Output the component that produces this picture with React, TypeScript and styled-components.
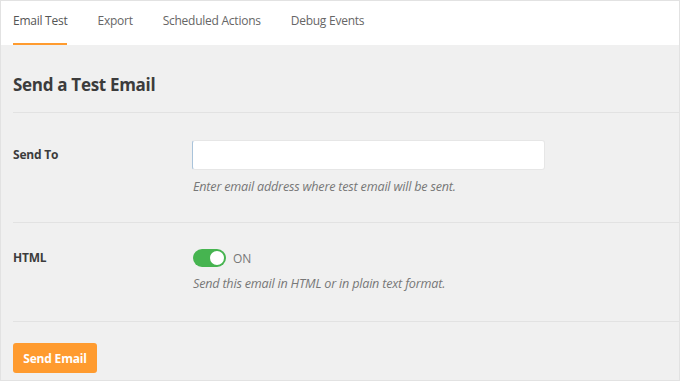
import React from 'react'
import styled, {createGlobalStyle} from 'styled-components'

const GlobalStyle = createGlobalStyle`
	html, body {
		margin: 0;
		padding: 0;
		background: #fff;
	}
	body {
		font-family: "Open Sans", "Noto Sans", sans-serif;
	}
	* {
		box-sizing: border-box;
	}
`

const Page = styled.div`
	width: 680px;
	height: 381px;
	border: 1px solid #e2e2e2;
	background-color: #f0f0f0;
	display: flex;
	flex-direction: column;
	overflow: hidden;
`

const TabBar = styled.nav`
	display: flex;
	gap: 30px;
	height: 44px;
	padding: 0 12px;
	background-color: #fff;
`

type TabProps = {
	active?: boolean
}

const Tab = styled.a<TabProps>`
	display: flex;
	align-items: center;
	height: 100%;
	font-size: 12px;
	color: ${props => props.active ? '#555' : '#666'};
	text-decoration: none;
	cursor: pointer;
	letter-spacing: -0.25px;
	border-bottom: 2px solid ${props => props.active ? '#ff9b2f' : 'transparent'};
	padding-bottom: 3px;
`

const Content = styled.section`
	flex: 1;
	padding-left: 12px;
`

const Heading = styled.h2`
	margin: 0;
	height: 68px;
	display: flex;
	align-items: center;
	padding-top: 11px;
	font-size: 17px;
	font-weight: 700;
	color: #3c3c3c;
	letter-spacing: -0.3px;
	border-bottom: 1px solid #e2e2e2;
`

type RowProps = {
	height: number
	top: number
}

const Row = styled.div<RowProps>`
	display: grid;
	grid-template-columns: 179px 1fr;
	height: ${props => props.height}px;
	padding-top: ${props => props.top}px;
	border-bottom: 1px solid #e2e2e2;
`

const Label = styled.label`
	font-size: 12px;
	font-weight: 700;
	color: #3c3c3c;
	line-height: 30px;
	letter-spacing: -0.2px;
`

const Field = styled.div`
	display: flex;
	flex-direction: column;
`

const TextInput = styled.input`
	width: 353px;
	height: 30px;
	border: 1px solid #e6e6e6;
	border-left: 1px solid #a9c3da;
	border-radius: 3px;
	background: #fff;
	outline: none;
	font: inherit;
`

const Help = styled.p`
	margin: 8px 0 0 1px;
	font-size: 12.6px;
	font-style: italic;
	color: #777;
	letter-spacing: -0.2px;
`

const SwitchWrap = styled.div`
	display: flex;
	align-items: center;
	gap: 7px;
	height: 30px;
	margin-left: 1px;
`

const Track = styled.span`
	position: relative;
	width: 33px;
	height: 18px;
	border-radius: 9px;
	background-color: #46b450;
`

const Knob = styled.span`
	position: absolute;
	top: 2px;
	right: 2px;
	width: 14px;
	height: 14px;
	border-radius: 50%;
	background-color: #fff;
`

const SwitchText = styled.span`
	font-size: 12px;
	color: #777;
`

const SwitchHelp = styled(Help)`
	margin-top: 2px;
`

const Footer = styled.div`
	padding-top: 21px;
`

const Button = styled.button`
	width: 84px;
	height: 30px;
	border: none;
	border-radius: 3px;
	background-color: #ff9b2f;
	color: #fff;
	font-family: inherit;
	font-size: 12px;
	font-weight: 700;
	letter-spacing: -0.2px;
	cursor: pointer;
`

const App = () => {
	return (
		<>
			<GlobalStyle/>
			<Page>
				<TabBar>
					<Tab active>Email Test</Tab>
					<Tab>Export</Tab>
					<Tab>Scheduled Actions</Tab>
					<Tab>Debug Events</Tab>
				</TabBar>
				<Content>
					<Heading>Send a Test Email</Heading>
					<Row height={110} top={27}>
						<Label>Send To</Label>
						<Field>
							<TextInput type="email"/>
							<Help>Enter email address where test email will be sent.</Help>
						</Field>
					</Row>
					<Row height={99} top={20}>
						<Label>HTML</Label>
						<Field>
							<SwitchWrap>
								<Track><Knob/></Track>
								<SwitchText>ON</SwitchText>
							</SwitchWrap>
							<SwitchHelp>Send this email in HTML or in plain text format.</SwitchHelp>
						</Field>
					</Row>
					<Footer>
						<Button>Send Email</Button>
					</Footer>
				</Content>
			</Page>
		</>
	)
}

export default App
